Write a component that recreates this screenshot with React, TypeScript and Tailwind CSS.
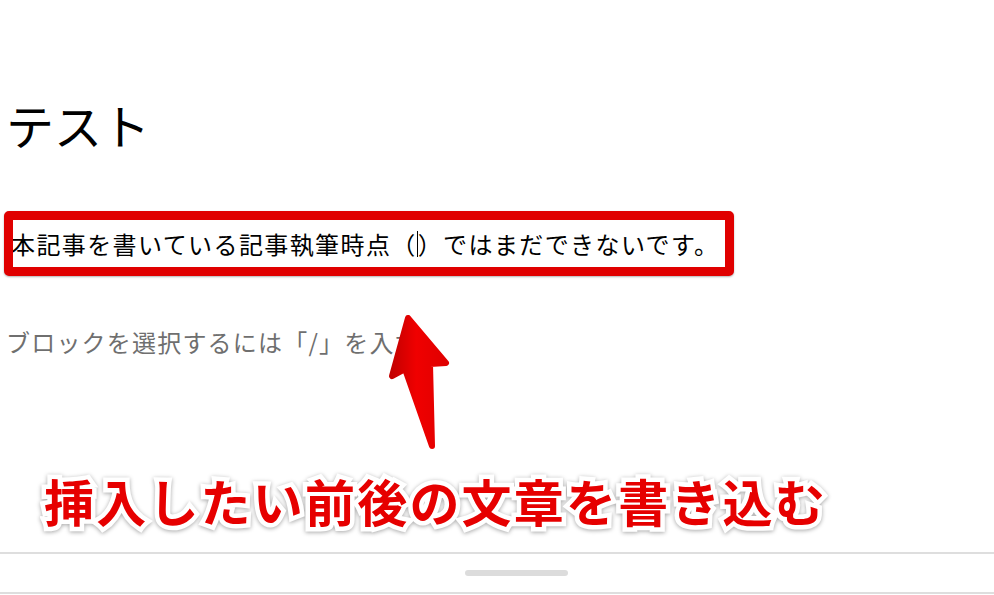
import React from "react";

const JP = "font-['Noto_Sans_CJK_JP','Noto_Sans',sans-serif]";

function Arrow() {
  return (
    <svg
      className="pointer-events-none absolute left-0 top-0"
      width="994"
      height="595"
      viewBox="0 0 994 595"
    >
      <defs>
        <linearGradient id="arrowFill" x1="0" y1="0" x2="1" y2="0">
          <stop offset="0" stopColor="#c40000" />
          <stop offset="0.45" stopColor="#f00000" />
          <stop offset="1" stopColor="#e00000" />
        </linearGradient>
      </defs>
      <path
        d="M408 318 L446 363 L430 364 L432 446 L405 369 L392 376 Z"
        fill="url(#arrowFill)"
        stroke="url(#arrowFill)"
        strokeWidth="6"
        strokeLinejoin="round"
      />
    </svg>
  );
}

export default function App() {
  return (
    <div
      className={`relative flex h-[595px] w-full flex-col overflow-hidden bg-white ${JP}`}
    >
      <h1 className="mt-[92px] h-[64px] pl-[6px] text-[48px] font-normal leading-[64px] text-black">
        テスト
      </h1>

      <div className="ml-[4px] mt-[55px] h-[65px] w-[730px] overflow-hidden rounded-[5px] border-[9px] border-[#e00000] bg-white shadow-[0_1px_2px_rgba(0,0,0,0.3)]">
        <p className="-ml-[2px] flex items-center whitespace-nowrap text-[24px] leading-[47px] tracking-[1.4px] text-black">
          <span>本記事を書いている記事執筆時点（</span>
          <span className="h-[26px] w-[1px] bg-black" />
          <span>）ではまだできないです。</span>
        </p>
      </div>

      <p className="mt-[48px] h-[36px] whitespace-nowrap pl-[6px] text-[24px] leading-[36px] tracking-[1.2px] text-[#6f6f6f]">
        ブロックを選択するには「/」を入力
      </p>

      <div className="flex-1" />

      <div className="flex h-[42px] items-center border-y-2 border-[#dedede] pl-[465px]">
        <div className="h-[6px] w-[103px] rounded-full bg-[#dcdcdc]" />
      </div>
      <div className="h-[1px]" />

      <Arrow />

      <div className="absolute left-[44px] top-[470px] whitespace-nowrap text-[50px] font-bold leading-[60px] tracking-[2.2px] text-[#e60000] [paint-order:stroke_fill] [-webkit-text-stroke:9px_white] [filter:drop-shadow(0_1px_2px_rgba(0,0,0,0.35))]">
        挿入したい前後の文章を書き込む
      </div>
    </div>
  );
}
